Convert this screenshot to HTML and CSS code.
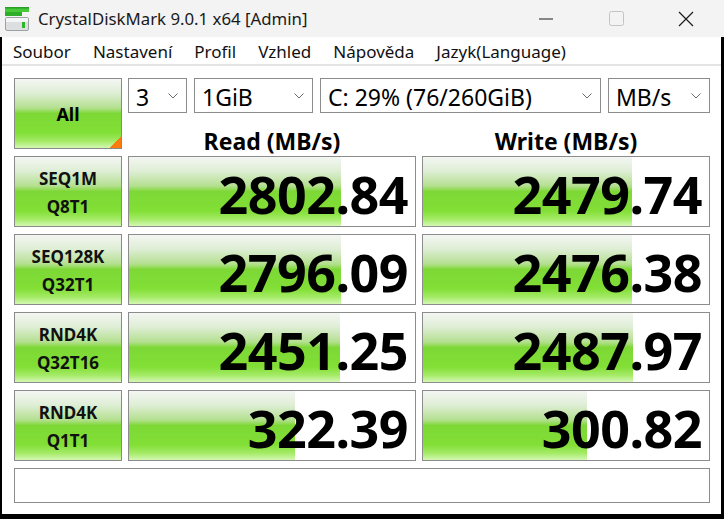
FILE: index.html
```html
<!DOCTYPE html>
<html lang="cs">
<head>
<meta charset="utf-8">
<title>CrystalDiskMark 9.0.1 x64 [Admin]</title>
<link rel="stylesheet" href="styles.css">
</head>
<body>
<div class="window">
  <header class="titlebar">
    <svg class="appicon" width="24" height="24" viewBox="0 0 24 24" aria-hidden="true">
      <rect x="0" y="0" width="24" height="5" fill="#47c93a"/>
      <rect x="0" y="0" width="24" height="1.5" fill="#2a9e24"/>
      <rect x="0" y="5" width="17" height="4" fill="#2fae2a"/>
      <rect x="0.5" y="10.5" width="23" height="13" rx="1.5" fill="#dcdedf" stroke="#9da1a3"/>
      <rect x="1" y="11" width="22" height="4" fill="#f4f5f5"/>
      <rect x="17" y="15" width="3" height="6" fill="#2fb52a"/>
    </svg>
    <span class="title">CrystalDiskMark 9.0.1 x64 [Admin]</span>
    <div class="controls">
      <span class="ctl"><svg width="14" height="2" viewBox="0 0 14 2"><path d="M0 1 H14" stroke="#1b1b1b" stroke-width="1"/></svg></span>
      <span class="ctl"><svg width="15" height="15" viewBox="0 0 15 15"><rect x="0.5" y="0.5" width="14" height="14" rx="2" fill="none" stroke="#c4c4c4"/></svg></span>
      <span class="ctl"><svg width="16" height="16" viewBox="0 0 16 16"><path d="M1 1 L15 15 M15 1 L1 15" stroke="#1b1b1b" stroke-width="1.2"/></svg></span>
    </div>
  </header>
  <div class="frame">
    <nav class="menubar">
      <span class="menu">Soubor</span>
      <span class="menu">Nastavení</span>
      <span class="menu">Profil</span>
      <span class="menu">Vzhled</span>
      <span class="menu">Nápověda</span>
      <span class="menu">Jazyk(Language)</span>
    </nav>
    <main class="content">
      <div class="grid">
        <div class="all">All</div>
        <div class="top">
          <div class="selects">
            <div class="select s-count"><span>3</span><svg width="10" height="6" viewBox="0 0 10 6"><path d="M0.5 0.5 L5 5 L9.5 0.5" fill="none" stroke="#6a6a6a"/></svg></div>
            <div class="select s-size"><span>1GiB</span><svg width="10" height="6" viewBox="0 0 10 6"><path d="M0.5 0.5 L5 5 L9.5 0.5" fill="none" stroke="#6a6a6a"/></svg></div>
            <div class="select s-drive"><span>C: 29% (76/260GiB)</span><svg width="10" height="6" viewBox="0 0 10 6"><path d="M0.5 0.5 L5 5 L9.5 0.5" fill="none" stroke="#6a6a6a"/></svg></div>
            <div class="select s-unit"><span>MB/s</span><svg width="10" height="6" viewBox="0 0 10 6"><path d="M0.5 0.5 L5 5 L9.5 0.5" fill="none" stroke="#6a6a6a"/></svg></div>
          </div>
          <div class="heads">
            <div class="head">Read (MB/s)</div>
            <div class="head">Write (MB/s)</div>
          </div>
        </div>

        <div class="label"><span>SEQ1M</span><span>Q8T1</span></div>
        <div class="val" style="--w:212px">2802.84</div>
        <div class="val" style="--w:209px">2479.74</div>

        <div class="label"><span>SEQ128K</span><span>Q32T1</span></div>
        <div class="val" style="--w:212px">2796.09</div>
        <div class="val" style="--w:209px">2476.38</div>

        <div class="label"><span>RND4K</span><span>Q32T16</span></div>
        <div class="val" style="--w:211px">2451.25</div>
        <div class="val" style="--w:210px">2487.97</div>

        <div class="label"><span>RND4K</span><span>Q1T1</span></div>
        <div class="val" style="--w:166px">322.39</div>
        <div class="val" style="--w:164px">300.82</div>

        <div class="status"></div>
      </div>
    </main>
  </div>
</div>
</body>
</html>
```
FILE: styles.css
```css
* { box-sizing: border-box; }
html, body { margin: 0; padding: 0; }
body {
  width: 724px;
  height: 519px;
  overflow: hidden;
  background: #ffffff;
  font-family: "Noto Sans", "Segoe UI", sans-serif;
  color: #000;
}
.window {
  width: 724px;
  height: 519px;
  display: flex;
  flex-direction: column;
}
.titlebar {
  height: 37px;
  flex: none;
  display: flex;
  align-items: center;
  background: #f3f3f3;
}
.appicon { margin-left: 5px; flex: none; }
.title {
  margin-left: 9px;
  font-size: 16.8px;
  color: #1a1a1a;
  white-space: nowrap;
  padding-bottom: 1px;
}
.controls {
  margin-left: auto;
  margin-right: 3px;
  display: flex;
  height: 100%;
}
.ctl {
  width: 70px;
  display: flex;
  align-items: center;
  justify-content: center;
}
.frame {
  flex: 1;
  display: flex;
  flex-direction: column;
  border-left: 2px solid #000;
  border-right: 3px solid #000;
  border-bottom: 5px solid #000;
  background: #fff;
}
.menubar {
  height: 29px;
  flex: none;
  display: flex;
  align-items: center;
  border-bottom: 2px solid #e4e4e4;
  font-size: 17px;
  color: #111;
}
.menu { padding: 0 11px; white-space: nowrap; line-height: 1; padding-top: 2px; }
.content {
  flex: 1;
  padding: 12px 11px 10px 12px;
}
.grid {
  display: grid;
  grid-template-columns: 108px 288px 288px;
  grid-template-rows: repeat(5, 71px) 35px;
  column-gap: 6px;
  row-gap: 7px;
}
.all, .label {
  background: linear-gradient(#f4f6f2 0%, #dfeed6 20%, #b4e090 42%, #7dd836 50%, #82df35 78%, #a4ea66 90%, #d4f8b4 100%);
}
.all {
  border: 1px solid #8a8a8a;
  display: flex;
  align-items: center;
  justify-content: center;
  font-weight: 700;
  font-size: 18px;
  padding-top: 1px;
  background:
    linear-gradient(135deg, transparent 50%, #fb7c0c 50%) no-repeat right bottom / 12px 12px,
    linear-gradient(#f4f6f2 0%, #dfeed6 20%, #b4e090 42%, #7dd836 50%, #82df35 78%, #a4ea66 90%, #d4f8b4 100%);
}
.top {
  grid-column: 2 / 4;
  display: flex;
  flex-direction: column;
}
.selects {
  height: 35px;
  display: flex;
  gap: 7px;
}
.select {
  height: 35px;
  border: 1px solid #8c8c8c;
  background: #fff;
  display: flex;
  align-items: center;
  justify-content: space-between;
  padding: 0 8px 0 7px;
  font-size: 23px;
  white-space: nowrap;
}
.select span { line-height: 1; padding-top: 4px; }
.select svg { flex: none; margin-top: 1px; }
.s-count { width: 59px; }
.s-size { width: 119px; }
.s-drive { width: 281px; }
.s-unit { flex: 1; }
.heads {
  display: grid;
  grid-template-columns: 288px 288px;
  column-gap: 6px;
}
.head {
  text-align: center;
  font-weight: 700;
  font-size: 23px;
  line-height: 24px;
  padding-top: 16px;
  white-space: nowrap;
}
.label {
  border: 1px solid #8a8a8a;
  display: flex;
  flex-direction: column;
  align-items: center;
  justify-content: center;
  padding-top: 3px;
  font-weight: 700;
  font-size: 17px;
  line-height: 28px;
  color: #111;
}
.val {
  border: 1px solid #8c8c8c;
  background-color: #fff;
  background-image: linear-gradient(#f4f6f2 0%, #dfeed6 20%, #b4e090 42%, #7dd836 50%, #82df35 78%, #a4ea66 90%, #d4f8b4 100%);
  background-repeat: no-repeat;
  background-size: var(--w) 100%;
  display: flex;
  align-items: center;
  justify-content: flex-end;
  padding: 4px 7px 0 0;
  font-weight: 700;
  font-size: 52px;
  line-height: 1;
  letter-spacing: -0.5px;
}
.status {
  grid-column: 1 / 4;
  border: 1px solid #8c8c8c;
  background: #fff;
}
```
